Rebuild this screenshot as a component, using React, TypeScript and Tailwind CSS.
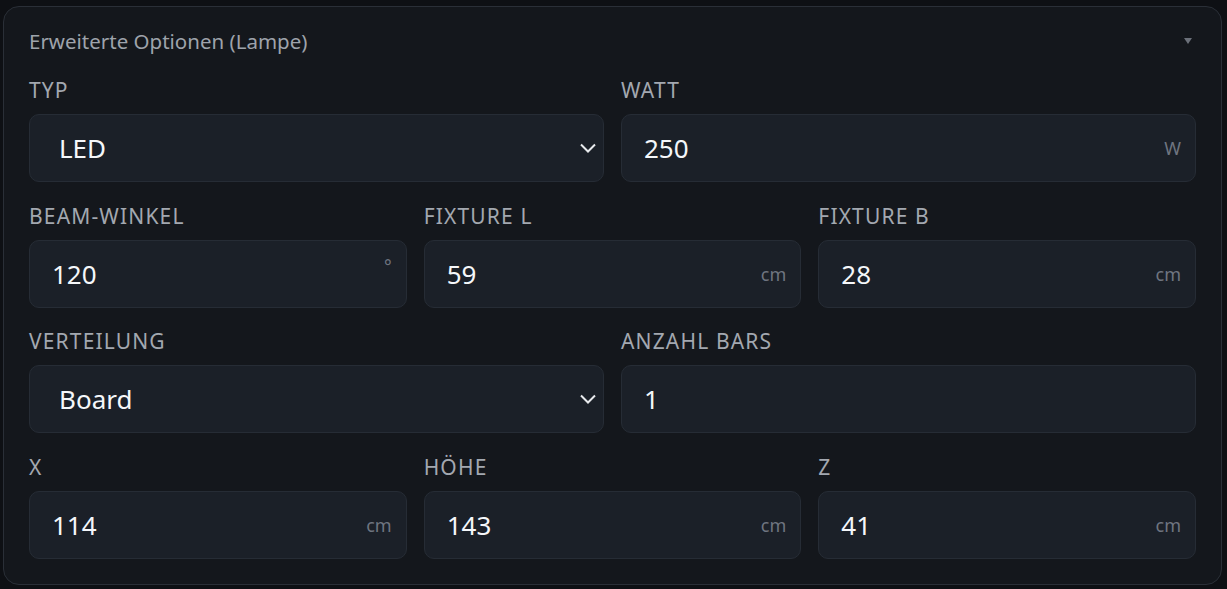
import { ChangeEvent, useState } from "react";

type Field = {
  label: string;
  value: string;
  unit?: string;
  options?: string[];
};

function Label({ children }: { children: string }) {
  return (
    <div className="text-[21px] leading-[24px] mb-[12px] tracking-[0.055em] uppercase text-[#a3a8b0]">
      {children}
    </div>
  );
}

function NumberField({ field }: { field: Field }) {
  const [val, setVal] = useState(field.value);
  return (
    <div className="flex flex-col min-w-0">
      <Label>{field.label}</Label>
      <div className="relative">
        <input
          type="text"
          value={val}
          onChange={(e: ChangeEvent<HTMLInputElement>) => setVal(e.target.value)}
          className="w-full h-[68px] rounded-[10px] bg-[#1b2028] border border-[#262c35] pl-[22px] pr-[50px] text-[26px] text-[#f5f7fa] focus:outline-none"
        />
        {field.unit && (
          <span className="absolute right-[15px] top-1/2 -translate-y-1/2 text-[18px] text-[#6f7580] pointer-events-none">
            {field.unit === "°" ? <span className="relative -top-[8px]">°</span> : field.unit}
          </span>
        )}
      </div>
    </div>
  );
}

function SelectField({ field }: { field: Field }) {
  const [val, setVal] = useState(field.value);
  return (
    <div className="flex flex-col min-w-0">
      <Label>{field.label}</Label>
      <div className="relative">
        <select
          value={val}
          onChange={(e) => setVal(e.target.value)}
          className="appearance-none w-full h-[68px] rounded-[10px] bg-[#1b2028] border border-[#262c35] pl-[29px] pr-[50px] text-[26px] text-[#f5f7fa] focus:outline-none"
        >
          {field.options?.map((o) => (
            <option key={o} value={o}>
              {o}
            </option>
          ))}
        </select>
        {/* Chevron */}
        <svg
          className="absolute right-[7px] top-1/2 -translate-y-1/2 pointer-events-none"
          width="18"
          height="18"
          viewBox="0 0 18 18"
          fill="none"
        >
          <path d="M2 5.5 L9 12.5 L16 5.5" stroke="#e8eaed" strokeWidth="2" />
        </svg>
      </div>
    </div>
  );
}

export default function App() {
  return (
    <div
      className="h-[589px] bg-[#0e1014] pt-[6px] pl-[3px] pr-[5px]"
      style={{ fontFamily: '"Noto Sans", "Open Sans", sans-serif' }}
    >
      <div className="rounded-[16px] border border-[#2a2f37] bg-[#14171c] px-[25px] pt-[10px] pb-[25px]">
        {/* Header */}
        <div className="flex items-center justify-between h-[48px] mb-[13px]">
          <span className="text-[20.5px] text-[#9ea3ab]">Erweiterte Optionen (Lampe)</span>
          <svg width="10" height="8" viewBox="0 0 10 8" className="mr-[3px]">
            <path d="M1 1 L9 1 L5 7 Z" fill="#6b7079" />
          </svg>
        </div>

        <div className="flex flex-col gap-y-[21.7px]">
          <div className="grid grid-cols-2 gap-x-[17px]">
            <SelectField field={{ label: "Typ", value: "LED", options: ["LED", "HPS", "CMH"] }} />
            <NumberField field={{ label: "Watt", value: "250", unit: "W" }} />
          </div>
          <div className="grid grid-cols-3 gap-x-[17px]">
            <NumberField field={{ label: "Beam-Winkel", value: "120", unit: "°" }} />
            <NumberField field={{ label: "Fixture L", value: "59", unit: "cm" }} />
            <NumberField field={{ label: "Fixture B", value: "28", unit: "cm" }} />
          </div>
          <div className="grid grid-cols-2 gap-x-[17px]">
            <SelectField field={{ label: "Verteilung", value: "Board", options: ["Board", "Bar", "Spot"] }} />
            <NumberField field={{ label: "Anzahl Bars", value: "1" }} />
          </div>
          <div className="grid grid-cols-3 gap-x-[17px]">
            <NumberField field={{ label: "X", value: "114", unit: "cm" }} />
            <NumberField field={{ label: "Höhe", value: "143", unit: "cm" }} />
            <NumberField field={{ label: "Z", value: "41", unit: "cm" }} />
          </div>
        </div>
      </div>
    </div>
  );
}
